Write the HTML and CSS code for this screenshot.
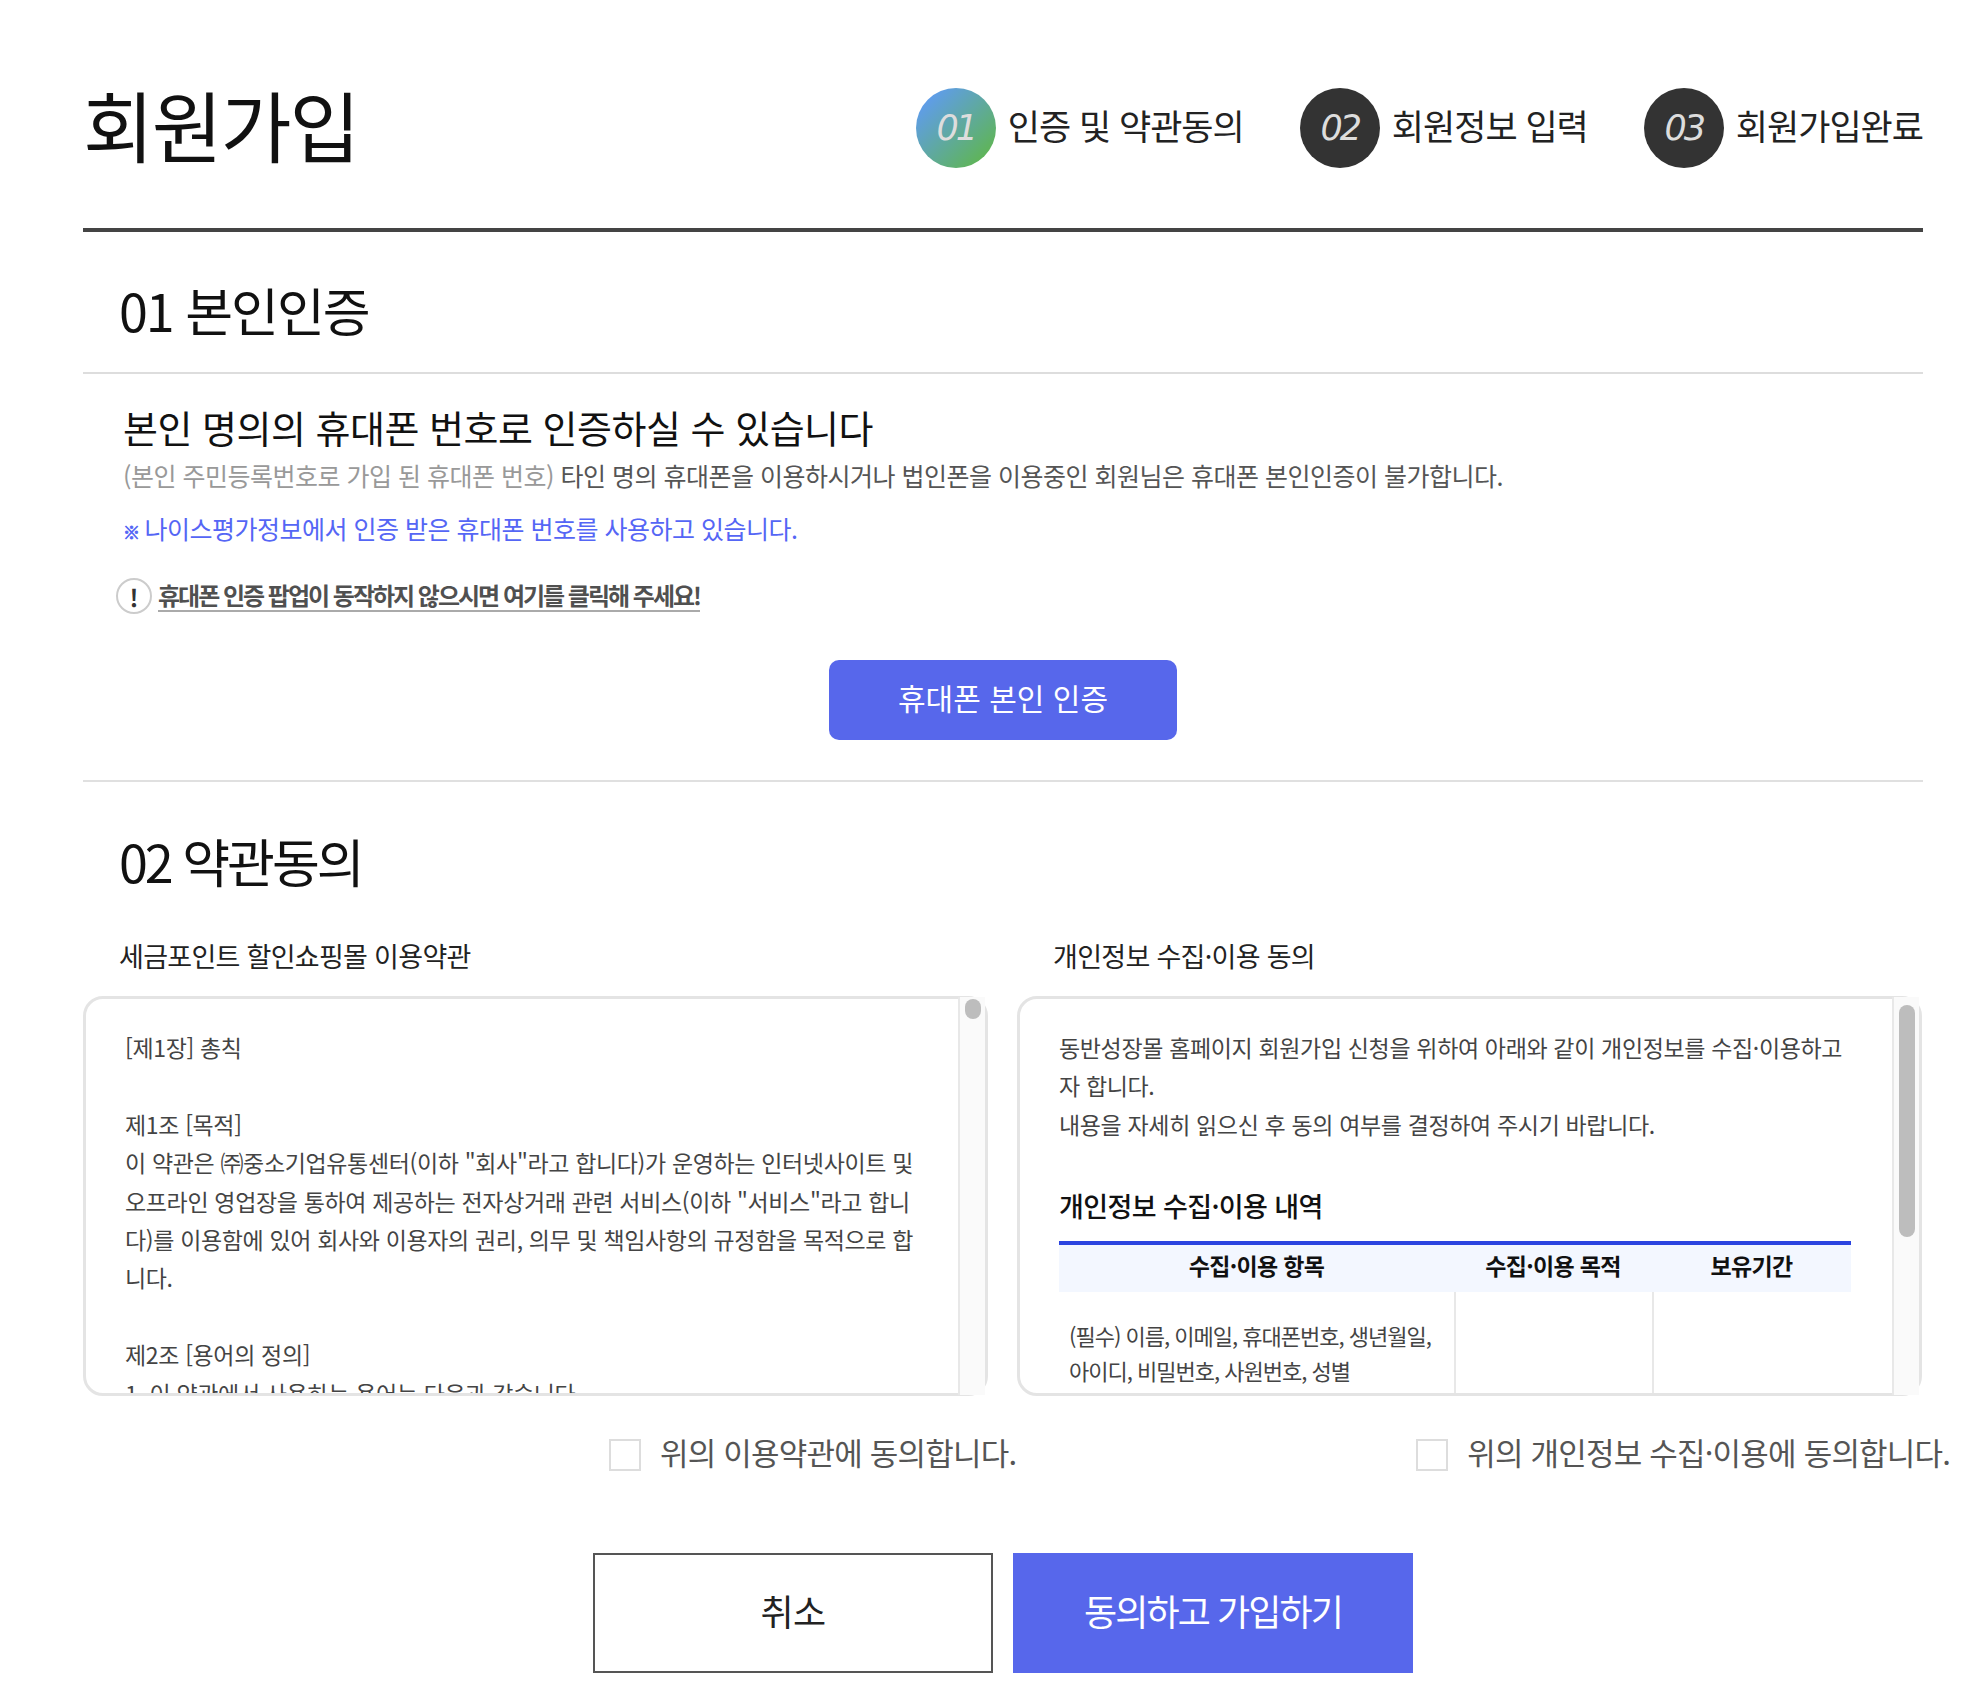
FILE: index.html
```html
<!DOCTYPE html>
<html lang="ko">
<head>
<meta charset="utf-8">
<title>회원가입</title>
<link rel="stylesheet" href="styles.css">
</head>
<body>
<div class="page">
  <header class="top">
    <h1 class="title">회원가입</h1>
    <ol class="steps">
      <li class="step"><span class="num num-on">01</span><span class="step-label">인증 및 약관동의</span></li>
      <li class="step"><span class="num">02</span><span class="step-label">회원정보 입력</span></li>
      <li class="step"><span class="num">03</span><span class="step-label">회원가입완료</span></li>
    </ol>
  </header>

  <section class="auth">
    <h2 class="sec-title sec-first">01 본인인증</h2>
    <div class="auth-body">
      <p class="lead">본인 명의의 휴대폰 번호로 인증하실 수 있습니다</p>
      <p class="sub"><span class="sub-gray">(본인 주민등록번호로 가입 된 휴대폰 번호)</span> 타인 명의 휴대폰을 이용하시거나 법인폰을 이용중인 회원님은 휴대폰 본인인증이 불가합니다.</p>
      <p class="note"><span class="note-mark">※</span>나이스평가정보에서 인증 받은 휴대폰 번호를 사용하고 있습니다.</p>
      <p class="warn"><span class="warn-icon">!</span><a class="warn-link">휴대폰 인증 팝업이 동작하지 않으시면 여기를 클릭해 주세요!</a></p>
      <div class="auth-action"><button class="auth-btn">휴대폰 본인 인증</button></div>
    </div>
  </section>

  <section class="terms">
    <h2 class="sec-title sec-second">02 약관동의</h2>
    <div class="terms-grid">
      <div class="term">
        <h3 class="term-label">세금포인트 할인쇼핑몰 이용약관</h3>
        <div class="box">
          <div class="box-text">[제1장] 총칙<br><br>제1조 [목적]<br>이 약관은 ㈜중소기업유통센터(이하 "회사"라고 합니다)가 운영하는 인터넷사이트 및 오프라인 영업장을 통하여 제공하는 전자상거래 관련 서비스(이하 "서비스"라고 합니다)를 이용함에 있어 회사와 이용자의 권리, 의무 및 책임사항의 규정함을 목적으로 합니다.<br><br>제2조 [용어의 정의]<br>1. 이 약관에서 사용하는 용어는 다음과 같습니다.</div>
          <div class="scrollbar"><span class="thumb thumb-short"></span></div>
        </div>
      </div>
      <div class="term">
        <h3 class="term-label">개인정보 수집·이용 동의</h3>
        <div class="box">
          <div class="box-text">동반성장몰 홈페이지 회원가입 신청을 위하여 아래와 같이 개인정보를 수집·이용하고자 합니다.<br>내용을 자세히 읽으신 후 동의 여부를 결정하여 주시기 바랍니다.
            <h4 class="table-title">개인정보 수집·이용 내역</h4>
            <table class="info">
              <colgroup><col class="col-a"><col class="col-b"><col class="col-c"></colgroup>
              <thead><tr><th>수집·이용 항목</th><th>수집·이용 목적</th><th>보유기간</th></tr></thead>
              <tbody><tr><td>(필수) 이름, 이메일, 휴대폰번호, 생년월일, 아이디, 비밀번호, 사원번호, 성별</td><td></td><td></td></tr></tbody>
            </table>
          </div>
          <div class="scrollbar"><span class="thumb thumb-long"></span></div>
        </div>
      </div>
    </div>
    <div class="agree-row">
      <label class="agree agree-left"><span class="check"></span>위의 이용약관에 동의합니다.</label>
      <label class="agree agree-right"><span class="check"></span>위의 개인정보 수집·이용에 동의합니다.</label>
    </div>
    <div class="actions">
      <button class="btn btn-cancel">취소</button>
      <button class="btn btn-ok">동의하고 가입하기</button>
    </div>
  </section>
</div>
</body>
</html>
```
FILE: styles.css
```css
* { box-sizing: border-box; }
html, body { margin: 0; padding: 0; background: #fff; }
body { font-family: "Noto Sans CJK KR", "Noto Sans", sans-serif; color: #111; overflow: hidden; }
h1, h2, h3, h4, p, ol { margin: 0; padding: 0; font-weight: 400; }
.page { width: 1976px; height: 1690px; padding: 0 53px 0 83px; overflow: hidden; }

.top { height: 232px; border-bottom: 4px solid #444; display: flex; justify-content: space-between; padding-top: 84px; }
.title { font-size: 77px; line-height: 80px; letter-spacing: -2px; color: #111; }
.steps { list-style: none; display: flex; gap: 56px; height: 80px; margin-top: 4px; }
.step { display: flex; align-items: center; gap: 12px; }
.num { width: 80px; height: 80px; border-radius: 50%; background: #333; color: #ddd; display: flex; align-items: center; justify-content: center; font-family: "DejaVu Sans", sans-serif; font-style: italic; font-weight: 200; font-size: 35px; letter-spacing: -3px; }
.num-on { background: linear-gradient(135deg, #5f9de8 15%, #5fb45a 85%); }
.step-label { font-size: 35px; letter-spacing: -1px; color: #222; white-space: nowrap; padding-bottom: 8px; }

.auth { border-bottom: 2px solid #e0e0e0; height: 550px; }
.sec-title { font-size: 52px; line-height: 70px; letter-spacing: -2px; color: #111; padding-left: 36px; }
.sec-first { height: 142px; padding-top: 43px; border-bottom: 2px solid #ddd; }
.auth-body { padding: 28px 0 0 40px; }
.lead { font-size: 38px; line-height: 50px; letter-spacing: -0.5px; color: #111; }
.sub { font-size: 25px; line-height: 44px; letter-spacing: -0.5px; color: #555; white-space: nowrap; margin-top: 1px; }
.sub-gray { color: #999; }
.note { font-size: 25px; line-height: 44px; letter-spacing: -0.5px; color: #5566f5; margin-top: 9px; }
.note-mark { font-size: 17px; font-weight: 900; margin-right: 5px; -webkit-text-stroke: 0.8px currentColor; }
.warn { display: flex; align-items: center; gap: 6px; margin: 24px 0 0 -7px; height: 36px; }
.warn-icon { width: 36px; height: 36px; border: 2px solid #ccc; border-radius: 50%; display: flex; align-items: center; justify-content: center; font-size: 24px; font-weight: 700; color: #333; flex: none; }
.warn-link { font-size: 24px; font-weight: 700; letter-spacing: -2px; color: #505050; line-height: 30px; border-bottom: 2px solid #aaa; }
.auth-action { margin: 46px 0 0 -40px; display: flex; justify-content: center; width: 1840px; }
.auth-btn { width: 348px; height: 80px; border: 0; border-radius: 10px; background: #5767eb; color: #fff; font-family: inherit; font-size: 30px; letter-spacing: 0; padding: 0 0 6px; }

.sec-second { padding-top: 44px; height: 154px; letter-spacing: -3px; }
.terms-grid { display: flex; gap: 29px; }
.term { width: 905px; }
.term-label { font-size: 27px; line-height: 40px; letter-spacing: -0.7px; padding-left: 36px; color: #222; margin-bottom: 20px; height: 40px; }
.box { width: 905px; height: 400px; border: 3px solid #e4e4e4; border-radius: 20px; display: flex; }
.box-text { flex: 1; min-width: 0; overflow: hidden; padding: 29px 38px 0 39px; font-size: 23px; line-height: 38.4px; letter-spacing: -0.35px; color: #444; border-radius: 18px 0 0 18px; }
.scrollbar { width: 27px; background: #fafafa; border-left: 2px solid #e8e8e8; display: flex; justify-content: center; flex: none; margin: -2px 0; }
.thumb { display: block; width: 16px; border-radius: 8px; background: #bdbdbd; }
.thumb-short { height: 20px; margin-top: 2px; }
.thumb-long { height: 232px; margin-top: 8px; }

.table-title { font-size: 27px; font-weight: 500; line-height: 40px; letter-spacing: -0.6px; color: #111; margin-top: 43px; }
.info { width: 792px; table-layout: fixed; border-collapse: separate; border-spacing: 0; margin-top: 15px; }
.col-a { width: 395px; }
.col-b { width: 198px; }
.col-c { width: 199px; }
.info th { height: 51px; background: #f3f7ff; border-top: 4px solid #2b44e0; font-size: 23px; font-weight: 700; color: #111; letter-spacing: -0.7px; padding: 0 0 8px; }
.info td { padding: 26px 10px; font-size: 22px; line-height: 35px; letter-spacing: -1px; color: #444; vertical-align: top; height: 120px; }
.info td + td { border-left: 2px solid #e8e8e8; }

.agree-row { display: flex; height: 112px; align-items: center; }
.agree { display: flex; align-items: center; gap: 19px; font-size: 31px; letter-spacing: -0.8px; color: #555; white-space: nowrap; padding-bottom: 2px; }
.agree-left { margin-left: 526px; }
.agree-right { margin-left: 400px; }
.check { width: 32px; height: 32px; border: 2px solid #ddd; background: #fff; flex: none; margin-top: 8px; }

.actions { display: flex; justify-content: center; gap: 20px; margin-top: 45px; width: 1840px; }
.btn { width: 400px; height: 120px; font-family: inherit; font-size: 36px; padding: 0 0 6px; }
.btn-cancel { background: #fff; border: 2px solid #555; color: #222; letter-spacing: -0.5px; }
.btn-ok { background: #5767eb; border: 0; color: #fff; letter-spacing: -1.9px; }
```
